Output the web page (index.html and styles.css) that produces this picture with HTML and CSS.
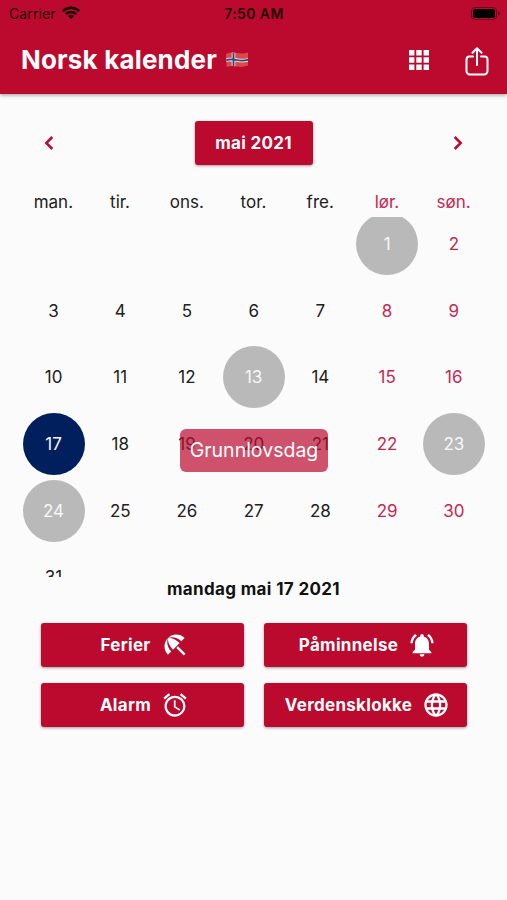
FILE: index.html
```html
<!DOCTYPE html>
<html lang="nb">
<head>
<meta charset="utf-8">
<title>Norsk kalender</title>
<link rel="stylesheet" href="styles.css">
</head>
<body>
<header class="header">
  <div class="status">
    <div class="carrier"><span class="carrier-name">Carrier</span>
      <svg class="wifi" viewBox="0 0 18 13"><path d="M0 4.2a12.8 12.8 0 0 1 18 0L16.2 6a10.2 10.2 0 0 0-14.4 0zM3 7.2a8.5 8.5 0 0 1 12 0L13.200 9a6 6 0 0 0-8.400 0zM6 10.100a4.300 4.300 0 0 1 6 0L9 13z"/></svg>
    </div>
    <span class="time">7:50 AM</span>
    <svg class="battery" viewBox="0 0 30 13"><rect x=".5" y=".5" width="25" height="12" rx="3.500" fill="none" stroke="#000" stroke-opacity=".4"/><rect x="2" y="2" width="22" height="9" rx="2"/><path d="M27 4.500q2 .7 2 2t-2 2z" opacity=".45"/></svg>
  </div>
  <div class="appbar">
    <h1 class="title">Norsk kalender</h1>
    <svg class="flag" viewBox="0 0 24 18"><defs><clipPath id="wave"><path d="M1 3Q6 .8 12 2t11-.6V14.500q-6 2.300-11 1T1.600 16z"/></clipPath></defs><g clip-path="url(#wave)"><path fill="#dc4a48" d="M0 0h24v18H0z"/><path fill="none" stroke="#ecd9dc" stroke-width="3.600" d="M8.500 0v18M0 9.500Q6 7.500 12 9t12-.5"/><path fill="none" stroke="#27477f" stroke-width="1.800" d="M8.500 0v18M0 9.500Q6 7.500 12 9t12-.5"/></g></svg>
    <svg class="apps" viewBox="0 0 20 20"><path d="M0 0h5.400v5.400H0zm7.300 0h5.400v5.400H7.300zm7.300 0H20v5.400h-5.400zM0 7.300h5.400v5.400H0zm7.300 0h5.400v5.400H7.300zm7.300 0H20v5.400h-5.400zM0 14.600h5.400V20H0zm7.300 0h5.400V20H7.300zm7.300 0H20V20h-5.400z"/></svg>
    <svg class="share" viewBox="0 0 24 29"><path d="M8 9.500H4.500a3 3 0 0 0-3 3V24a3.500 3.500 0 0 0 3.500 3.500h14a3.500 3.500 0 0 0 3.500-3.500V12.500a3 3 0 0 0-3-3H16M12 18V1.500M7.500 5.800 12 1.300l4.500 4.500"/></svg>
  </div>
</header>
<main>
  <nav class="month-nav">
    <svg class="chevron" viewBox="0 0 10 14"><path d="M8.300 1 2.300 7l6 6"/></svg>
    <button class="btn month">mai 2021</button>
    <svg class="chevron" viewBox="0 0 10 14"><path d="m1.700 1 6 6-6 6"/></svg>
  </nav>
  <div class="weekdays"><span>man.</span><span>tir.</span><span>ons.</span><span>tor.</span><span>fre.</span><span class="red">lør.</span><span class="red">søn.</span></div>
  <section class="calendar">
    <div class="days">
      <i></i><i></i><i></i><i></i><i></i><span class="mark">1</span><span class="red">2</span>
      <span>3</span><span>4</span><span>5</span><span>6</span><span>7</span><span class="red">8</span><span class="red">9</span>
      <span>10</span><span>11</span><span>12</span><span class="mark">13</span><span>14</span><span class="red">15</span><span class="red">16</span>
      <span class="mark today">17</span><span>18</span><span>19</span><span>20</span><span>21</span><span class="red">22</span><span class="mark">23</span>
      <span class="mark">24</span><span>25</span><span>26</span><span>27</span><span>28</span><span class="red">29</span><span class="red">30</span>
      <span>31</span>
    </div>
    <div class="toast">Grunnlovsdag</div>
  </section>
  <p class="date">mandag mai 17 2021</p>
  <div class="actions">
    <button class="btn"><span>Ferier</span><svg viewBox="0 0 24 24"><path d="m13.127 14.560 1.430-1.430 6.440 6.443L19.570 21zm4.293-5.730 2.860-2.860c-3.950-3.950-10.350-3.960-14.300-.02 3.930-1.300 8.310-.25 11.440 2.880zM5.950 5.980c-3.940 3.950-3.930 10.350.02 14.300l2.860-2.860C5.700 14.290 4.650 9.910 5.950 5.980zm.02-.02-.01.01c-.38 3.010 1.170 6.880 4.300 10.020l5.730-5.730c-3.130-3.130-7.010-4.680-10.020-4.300z"/></svg></button>
    <button class="btn"><span>Påminnelse</span><svg viewBox="0 0 24 24"><path d="M7.580 4.080 6.150 2.650C3.750 4.480 2.170 7.300 2.030 10.500h2c.15-2.650 1.510-4.970 3.550-6.420zm12.390 6.420h2c-.15-3.200-1.730-6.020-4.120-7.850l-1.420 1.430c2.020 1.450 3.390 3.770 3.540 6.420zM18 11c0-3.070-1.640-5.640-4.500-6.320V4c0-.83-.67-1.500-1.500-1.500s-1.500.67-1.500 1.500v.68C7.630 5.360 6 7.920 6 11v5l-2 2v1h16v-1l-2-2zm-6 11c.14 0 .27-.01.4-.04.65-.14 1.180-.58 1.440-1.180.1-.24.15-.5.15-.78h-4c.01 1.100.9 2 2.010 2z"/></svg></button>
    <button class="btn"><span>Alarm</span><svg viewBox="0 0 24 24"><path d="m22 5.720-4.600-3.860-1.290 1.530 4.600 3.860zM7.880 3.390 6.600 1.860 2 5.710l1.290 1.530zM12.500 8H11v6l4.750 2.850.75-1.230-4-2.370zM12 4c-4.970 0-9 4.030-9 9s4.020 9 9 9a9 9 0 1 0 0-18zm0 16c-3.870 0-7-3.130-7-7s3.130-7 7-7 7 3.130 7 7-3.130 7-7 7z"/></svg></button>
    <button class="btn"><span>Verdensklokke</span><svg viewBox="0 0 24 24"><path d="M11.990 2C6.470 2 2 6.480 2 12s4.470 10 9.990 10C17.520 22 22 17.520 22 12S17.520 2 11.990 2zm6.930 6h-2.950c-.32-1.250-.78-2.450-1.380-3.560 1.840.63 3.370 1.910 4.330 3.560zM12 4.040c.83 1.200 1.480 2.530 1.910 3.960h-3.820c.43-1.430 1.080-2.760 1.910-3.960zM4.260 14C4.100 13.360 4 12.690 4 12s.1-1.360.26-2h3.380c-.08.66-.14 1.320-.14 2s.06 1.340.14 2zm.82 2h2.950c.32 1.250.78 2.450 1.380 3.560-1.840-.63-3.370-1.900-4.330-3.560zm2.950-8H5.080c.96-1.660 2.490-2.930 4.330-3.560C8.810 5.550 8.350 6.750 8.030 8zM12 19.960c-.83-1.200-1.480-2.530-1.910-3.960h3.820c-.43 1.430-1.080 2.760-1.910 3.960zM14.340 14H9.660c-.09-.66-.16-1.320-.16-2s.07-1.350.16-2h4.680c.09.65.16 1.320.16 2s-.07 1.340-.16 2zm.25 5.560c.6-1.110 1.060-2.310 1.380-3.560h2.950c-.96 1.650-2.490 2.930-4.330 3.560zM16.360 14c.08-.66.14-1.320.14-2s-.06-1.340-.14-2h3.380c.16.64.26 1.310.26 2s-.1 1.360-.26 2z"/></svg></button>
  </div>
</main>
</body>
</html>
```
FILE: styles.css
```css
* { box-sizing: border-box; }
body { margin: 0; height: 900px; background: #fbfbfb; color: #202020; font-family: Inter, sans-serif; font-size: 17px; overflow: hidden; }
svg { display: block; flex: none; }

.header { height: 94px; background: #bb0a2d; box-shadow: 0 1px 4px rgba(0,0,0,.4); }
.status { display: grid; grid-template-columns: 1fr auto 1fr; align-items: center; height: 27px; padding: 0 6px 0 7px; font-size: 14px; line-height: 27px; color: #250207; }
.carrier { display: flex; align-items: center; gap: 6px; padding-left: 2px; }
.carrier-name { letter-spacing: .1px; }
.wifi { width: 18px; height: 13px; margin-top: -2px; fill: #160105; }
.time { font-weight: 600; font-size: 14px; letter-spacing: .4px; }
.battery { width: 30px; height: 13px; justify-self: end; }
.appbar { display: flex; align-items: center; height: 66px; padding: 0 18px 0 21px; }
.title { margin: 0; color: #fff; font-size: 26px; font-weight: 700; line-height: 32px; letter-spacing: .17px; }
.flag { width: 24px; height: 18px; margin-left: 8px; }
.apps { width: 20px; height: 20px; margin-left: auto; fill: #fff; }
.share { width: 24px; height: 29px; margin-left: 36px; margin-top: 2px; fill: none; stroke: #fff; stroke-width: 2; stroke-linecap: round; stroke-linejoin: round; }

.btn { display: flex; align-items: center; justify-content: center; gap: 10px; height: 44px; margin: 0; padding: 0; border: 0; border-radius: 3px; background: #bb0a2d; color: #fff; font: 700 17px Inter, sans-serif; letter-spacing: .3px; box-shadow: 0 1px 3px rgba(0,0,0,.38); }
.btn svg { width: 28px; height: 28px; fill: #fff; }
.month-nav { display: flex; align-items: center; justify-content: space-between; padding: 27px 44px 0; }
.month { width: 118px; }
.chevron { width: 10px; height: 14px; fill: none; stroke: #bb0a2d; stroke-width: 2.500; }

.weekdays, .days { display: grid; grid-template-columns: repeat(7, 1fr); width: 467px; margin: 0 auto; text-align: center; }
.weekdays { height: 52px; padding-top: 26px; line-height: 22px; }
.red { color: #c52850; }
.calendar { position: relative; height: 360px; overflow: hidden; }
.days { grid-auto-rows: 66.600px; margin: -6px 0 0 20.200px; place-items: center; }
.mark { display: grid; place-items: center; width: 62px; height: 62px; border-radius: 50%; background: #b9b9b9; color: #f7f7f7; }
.today { background: #001f5c; }
.toast { position: absolute; left: 180px; top: 212px; width: 148px; height: 43px; border-radius: 6px; background: rgba(187,10,45,.7); color: #fff; font-size: 19.500px; line-height: 43px; text-align: center; }

.date { margin: 0; color: #111; font-size: 17px; font-weight: 700; line-height: 24px; text-align: center; letter-spacing: .35px; }
.actions { display: grid; grid-template-columns: 203px 203px; gap: 16px 20px; justify-content: center; margin-top: 22px; }
.actions .btn { padding-left: 5px; }
```
